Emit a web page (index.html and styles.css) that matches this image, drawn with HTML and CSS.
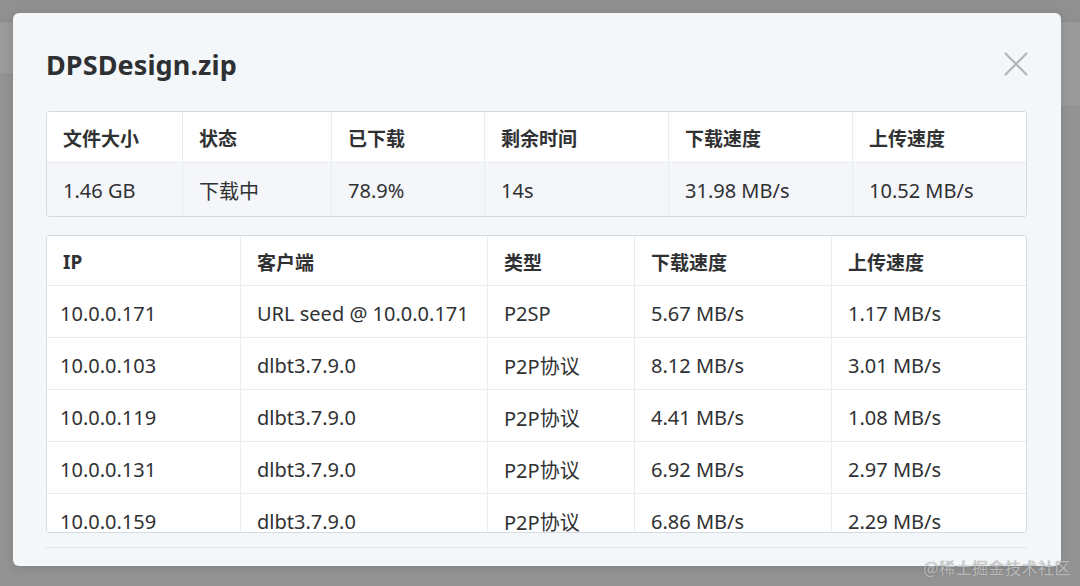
FILE: index.html
```html
<!DOCTYPE html>
<html lang="zh">
<head>
<meta charset="utf-8">
<title>DPSDesign.zip</title>
<link rel="stylesheet" href="styles.css">
</head>
<body>
<div class="page">
  <div class="page-top"></div>
  <div class="page-body">
    <div class="page-side"><div class="side-band"></div></div>
    <div class="page-main"><div class="main-band"></div></div>
  </div>
</div>

<div class="modal">
  <div class="modal-header">
    <div class="modal-title">DPSDesign.zip</div>
    <button class="close" aria-label="关闭">
      <svg width="24" height="24" viewBox="0 0 24 24"><path d="M1.5 1.5 L22.5 22.5 M22.5 1.5 L1.5 22.5" stroke="#b0b3b9" stroke-width="2" fill="none" stroke-linecap="round"/></svg>
    </button>
  </div>

  <table class="tbl info">
    <colgroup>
      <col style="width:136px"><col style="width:149px"><col style="width:153px"><col style="width:184px"><col style="width:184px"><col>
    </colgroup>
    <thead>
      <tr><th>文件大小</th><th>状态</th><th>已下载</th><th>剩余时间</th><th>下载速度</th><th>上传速度</th></tr>
    </thead>
    <tbody>
      <tr><td>1.46 GB</td><td>下载中</td><td>78.9%</td><td>14s</td><td>31.98 MB/s</td><td>10.52 MB/s</td></tr>
    </tbody>
  </table>

  <div class="peers-wrap">
    <table class="tbl peers">
      <colgroup>
        <col style="width:194px"><col style="width:247px"><col style="width:147px"><col style="width:197px"><col>
      </colgroup>
      <thead>
        <tr><th>IP</th><th>客户端</th><th>类型</th><th>下载速度</th><th>上传速度</th></tr>
      </thead>
      <tbody>
        <tr><td>10.0.0.171</td><td>URL seed @ 10.0.0.171</td><td>P2SP</td><td>5.67 MB/s</td><td>1.17 MB/s</td></tr>
        <tr><td>10.0.0.103</td><td>dlbt3.7.9.0</td><td>P2P协议</td><td>8.12 MB/s</td><td>3.01 MB/s</td></tr>
        <tr><td>10.0.0.119</td><td>dlbt3.7.9.0</td><td>P2P协议</td><td>4.41 MB/s</td><td>1.08 MB/s</td></tr>
        <tr><td>10.0.0.131</td><td>dlbt3.7.9.0</td><td>P2P协议</td><td>6.92 MB/s</td><td>2.97 MB/s</td></tr>
        <tr><td>10.0.0.159</td><td>dlbt3.7.9.0</td><td>P2P协议</td><td>6.86 MB/s</td><td>2.29 MB/s</td></tr>
      </tbody>
    </table>
  </div>
  <div class="divider"></div>
</div>

<div class="watermark">@稀土掘金技术社区</div>
</body>
</html>
```

FILE: styles.css
```css
* { box-sizing: border-box; }

html, body {
  margin: 0;
  padding: 0;
}

body {
  width: 1080px;
  height: 586px;
  overflow: hidden;
  position: relative;
  background: #939393;
  font-family: "Noto Sans", "Noto Sans CJK SC", sans-serif;
  color: #303133;
}

.page {
  display: flex;
  flex-direction: column;
  height: 586px;
}

.page-top {
  height: 22px;
  background: #909090;
  border-bottom: 1px solid #8a8a8a;
}

.page-body {
  flex: 1;
  display: flex;
}

.page-side {
  width: 300px;
}

.side-band {
  height: 53px;
  background: #9a9a9a;
  border-bottom: 1px solid #8c8c8c;
}

.page-main {
  flex: 1;
}

.main-band {
  height: 85px;
  background: #9a9a9a;
  border-bottom: 1px solid #8f8f8f;
}

.modal {
  position: absolute;
  left: 13px;
  top: 13px;
  width: 1048px;
  height: 553px;
  background: #f4f7fa;
  border-radius: 6px;
  padding: 32px 34px 0 33px;
  box-shadow: 0 2px 10px rgba(0, 0, 0, 0.12);
}

.modal-header {
  height: 40px;
  display: flex;
  align-items: center;
  justify-content: space-between;
}

.modal-title {
  font-size: 27px;
  font-weight: 700;
  line-height: 40px;
  color: #2f3033;
  letter-spacing: 0.1px;
}

.close {
  border: 0;
  background: none;
  padding: 0;
  width: 24px;
  height: 24px;
  margin-right: -1px;
  margin-top: -2px;
  display: flex;
}

.tbl {
  width: 981px;
  border-collapse: separate;
  border-spacing: 0;
  table-layout: fixed;
  font-size: 20px;
  color: #303133;
}

.tbl th,
.tbl td {
  text-align: left;
  padding: 0 16px;
  border-right: 1px solid #e9ecf1;
  border-bottom: 1px solid #e9ecf1;
  white-space: nowrap;
  overflow: hidden;
}

.tbl th:last-child,
.tbl td:last-child {
  border-right: 0;
}

.tbl th {
  font-weight: 700;
  font-size: 19px;
  background: #ffffff;
}

.info {
  margin-top: 26px;
  border: 1px solid #d6dbe2;
  border-radius: 3px;
  overflow: hidden;
}

.info th {
  height: 51px;
  padding-top: 2px;
}

.info td {
  height: 53px;
  background: #f4f6f9;
  border-bottom: 0;
  padding-top: 1px;
}

.peers-wrap {
  margin-top: 18px;
  width: 981px;
  height: 298px;
  overflow: hidden;
  border: 1px solid #d6dbe2;
  border-radius: 3px;
  background: #ffffff;
}

.peers {
  width: 979px;
}

.peers th {
  height: 50px;
  padding-top: 2px;
}

.peers td {
  height: 52px;
  background: #ffffff;
  padding-top: 3px;
}

.peers td:first-child {
  padding-left: 13px;
}

.divider {
  margin-top: 14px;
  width: 982px;
  margin-left: -1px;
  height: 1px;
  background: #e3e7ec;
}

.watermark {
  position: absolute;
  right: 9px;
  bottom: 7px;
  font-size: 16px;
  color: rgba(255, 255, 255, 0.55);
  text-shadow: 0 0 1px rgba(90, 90, 90, 0.8);
  letter-spacing: 0.5px;
  font-family: "Noto Sans CJK SC", "Noto Sans", sans-serif;
}
```
